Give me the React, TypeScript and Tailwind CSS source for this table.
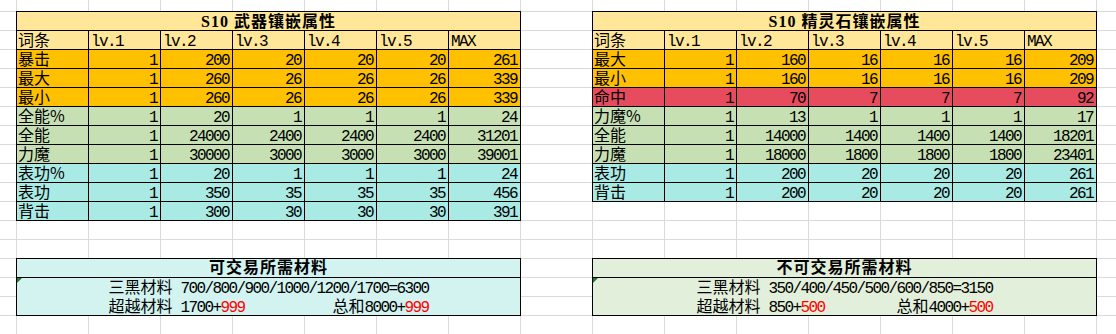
type Tone = 'orange' | 'green' | 'cyan' | 'red'

const toneBg: Record<Tone, string> = {
  orange: 'bg-[#ffc000]',
  green: 'bg-[#c6e0b4]',
  cyan: 'bg-[#a9eae4]',
  red: 'bg-[#e64c5e]',
}

type Row = { label: string; tone: Tone; values: number[] }

const weaponRows: Row[] = [
  { label: '暴击', tone: 'orange', values: [1, 200, 20, 20, 20, 261] },
  { label: '最大', tone: 'orange', values: [1, 260, 26, 26, 26, 339] },
  { label: '最小', tone: 'orange', values: [1, 260, 26, 26, 26, 339] },
  { label: '全能%', tone: 'green', values: [1, 20, 1, 1, 1, 24] },
  { label: '全能', tone: 'green', values: [1, 24000, 2400, 2400, 2400, 31201] },
  { label: '力魔', tone: 'green', values: [1, 30000, 3000, 3000, 3000, 39001] },
  { label: '表功%', tone: 'cyan', values: [1, 20, 1, 1, 1, 24] },
  { label: '表功', tone: 'cyan', values: [1, 350, 35, 35, 35, 456] },
  { label: '背击', tone: 'cyan', values: [1, 300, 30, 30, 30, 391] },
]

const gemRows: Row[] = [
  { label: '最大', tone: 'orange', values: [1, 160, 16, 16, 16, 209] },
  { label: '最小', tone: 'orange', values: [1, 160, 16, 16, 16, 209] },
  { label: '命中', tone: 'red', values: [1, 70, 7, 7, 7, 92] },
  { label: '力魔%', tone: 'green', values: [1, 13, 1, 1, 1, 17] },
  { label: '全能', tone: 'green', values: [1, 14000, 1400, 1400, 1400, 18201] },
  { label: '力魔', tone: 'green', values: [1, 18000, 1800, 1800, 1800, 23401] },
  { label: '表功', tone: 'cyan', values: [1, 200, 20, 20, 20, 261] },
  { label: '背击', tone: 'cyan', values: [1, 200, 20, 20, 20, 261] },
]

const headers = ['lv.1', 'lv.2', 'lv.3', 'lv.4', 'lv.5', 'MAX']

const cjkFont = "font-['Noto_Sans_CJK_SC',sans-serif]"
const monoFont = "font-['Liberation_Mono','Noto_Sans_CJK_SC',monospace]"
const tight = 'tracking-[-1.6px]'
const cell = 'h-[19px] border-r border-b border-black text-[16px] overflow-hidden whitespace-nowrap text-black'
// cjk text sits on a taller font box, so it needs its own line height
const cjkCell = `${cell} ${cjkFont} leading-[16px] pl-[1px]`
const numCell = `${cell} ${monoFont} ${tight} leading-[14px] pt-[4px]`

function StatTable({ title, rows }: { title: string; rows: Row[] }) {
  return (
    <div className="grid grid-cols-[repeat(7,72px)] border-l border-t border-black">
      <div className={`${cell} col-span-7 bg-[#ffe699] text-center font-bold tracking-[1px] font-['Liberation_Serif','Noto_Sans_CJK_SC',serif] leading-[16px] pt-[2px]`}>
        {title}
      </div>
      <div className={`${cjkCell} bg-[#ffe699]`}>词条</div>
      {headers.map((h) => (
        <div key={h} className={`${numCell} bg-[#ffe699] pl-[2px]`}>
          {h}
        </div>
      ))}
      {rows.map((r) => (
        <div key={r.label} className="contents">
          <div className={`${cjkCell} ${toneBg[r.tone]}`}>{r.label}</div>
          {r.values.map((v, i) => (
            <div key={i} className={`${numCell} ${toneBg[r.tone]} text-right pr-[3px]`}>
              {v}
            </div>
          ))}
        </div>
      ))}
    </div>
  )
}

function CostBox({
  title,
  bg,
  series,
  base,
  extra,
  total,
}: {
  title: string
  bg: string
  series: string
  base: string
  extra: string
  total: string
}) {
  return (
    <div className={`w-[505px] border border-black ${bg}`}>
      <div className={`h-[19px] border-b border-black text-center font-bold text-[16px] tracking-[1px] leading-[15px] ${cjkFont}`}>
        {title}
      </div>
      <div className={`relative h-[37px] flex justify-center text-[16px] ${monoFont}`}>
        <svg className="absolute left-0 top-0" width="5" height="5" viewBox="0 0 5 5">
          <polygon points="0,0 5,0 0,5" fill="#1e7b34" />
        </svg>
        <div className="flex flex-col">
          <div className="h-[19px] pt-[4px] leading-[15px] whitespace-nowrap">
            <span>三黑材料</span>
            <span className={`${tight} pl-[8px]`}>{series}</span>
          </div>
          <div className="flex items-baseline justify-between h-[18px] pt-[4px] leading-[15px] whitespace-nowrap">
            <span>
              超越材料
              <span className={`${tight} pl-[8px]`}>
                {base}+<span className="text-[#ff0000]">{extra}</span>
              </span>
            </span>
            <span>
              总和
              <span className={tight}>
                {total}+<span className="text-[#ff0000]">{extra}</span>
              </span>
            </span>
          </div>
        </div>
      </div>
    </div>
  )
}

export default function App() {
  return (
    <div className="w-[1116px] h-[334px] overflow-hidden bg-white pl-[16px] pt-[11px] [background-image:linear-gradient(to_right,#dadada_1px,transparent_1px),linear-gradient(to_bottom,#dadada_1px,transparent_1px)] [background-size:72px_19px] [background-position:16px_11px]">
      <div className="flex items-start gap-[71px]">
        <StatTable title="S10 武器镶嵌属性" rows={weaponRows} />
        <StatTable title="S10 精灵石镶嵌属性" rows={gemRows} />
      </div>
      <div className="flex items-start gap-[71px] mt-[37px]">
        <CostBox
          title="可交易所需材料"
          bg="bg-[#d2f3f0]"
          series="700/800/900/1000/1200/1700=6300"
          base="1700"
          extra="999"
          total="8000"
        />
        <CostBox
          title="不可交易所需材料"
          bg="bg-[#e2efda]"
          series="350/400/450/500/600/850=3150"
          base="850"
          extra="500"
          total="4000"
        />
      </div>
    </div>
  )
}
